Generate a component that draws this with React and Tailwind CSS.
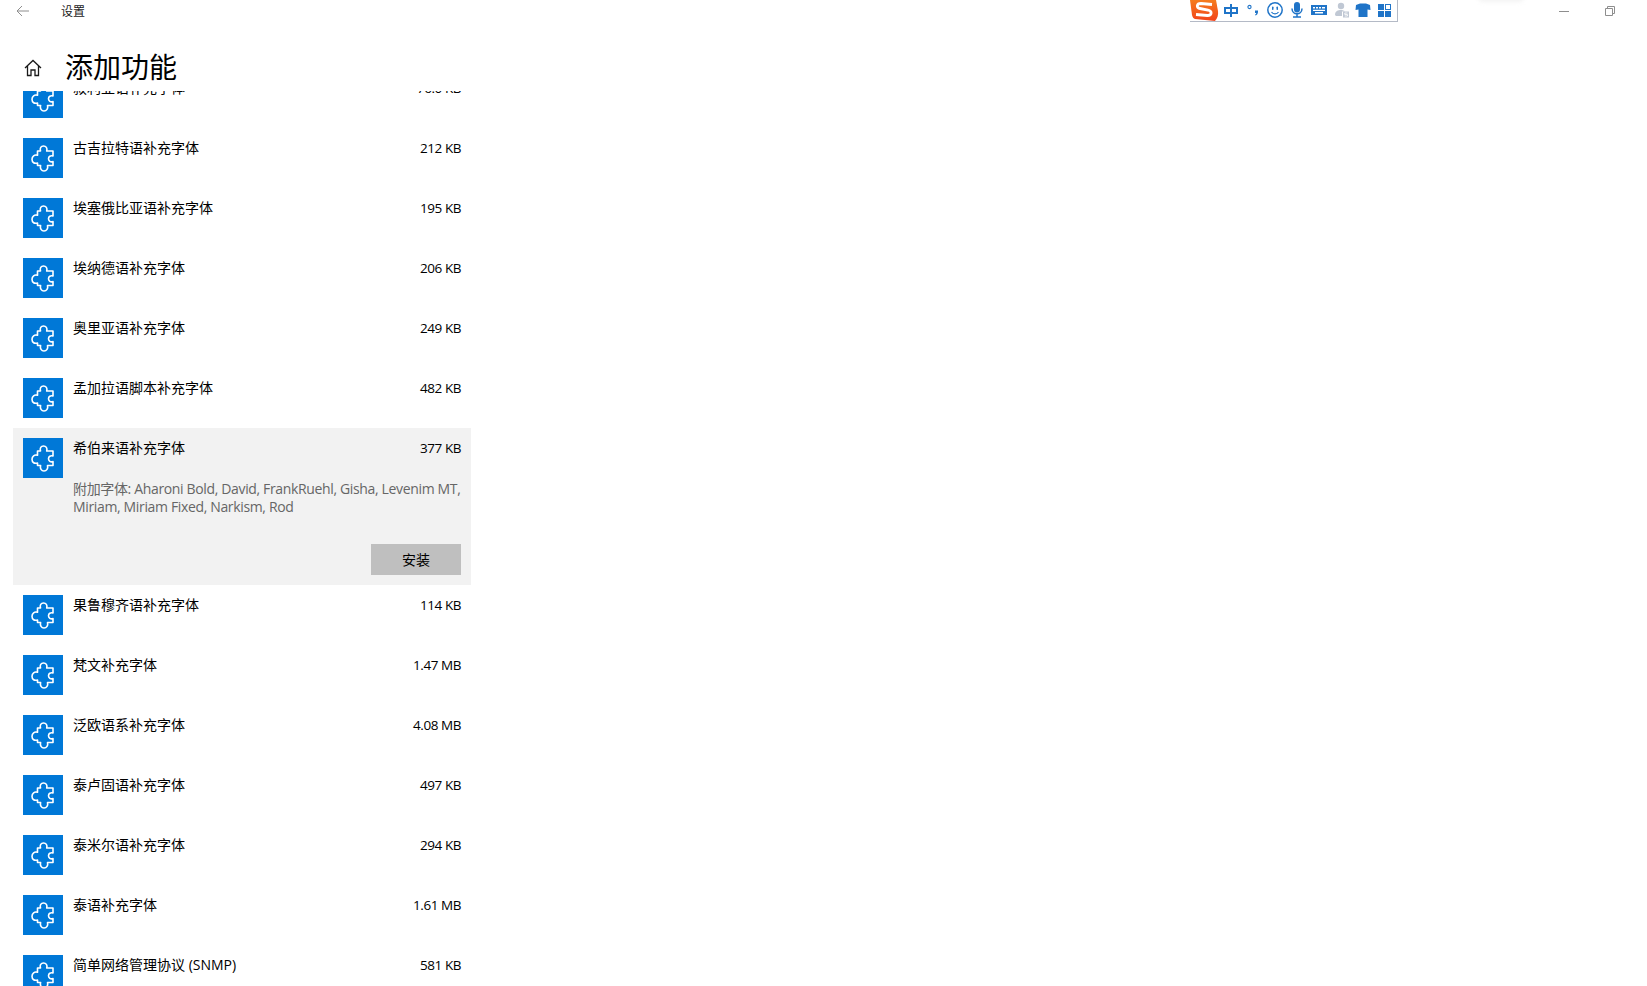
import React from 'react';

const fontStack = "font-['Open_Sans','Noto_Sans_CJK_SC',sans-serif]";

const rowsBefore = [
  { name: '叙利亚语补充字体', size: '76.0 KB' },
  { name: '古吉拉特语补充字体', size: '212 KB' },
  { name: '埃塞俄比亚语补充字体', size: '195 KB' },
  { name: '埃纳德语补充字体', size: '206 KB' },
  { name: '奥里亚语补充字体', size: '249 KB' },
  { name: '孟加拉语脚本补充字体', size: '482 KB' },
];

const rowsAfter = [
  { name: '果鲁穆齐语补充字体', size: '114 KB' },
  { name: '梵文补充字体', size: '1.47 MB' },
  { name: '泛欧语系补充字体', size: '4.08 MB' },
  { name: '泰卢固语补充字体', size: '497 KB' },
  { name: '泰米尔语补充字体', size: '294 KB' },
  { name: '泰语补充字体', size: '1.61 MB' },
  { name: '简单网络管理协议 (SNMP)', size: '581 KB' },
];

const PuzzleTile = () => (
  <div className="w-10 h-10 shrink-0 bg-[#0078d7]">
    <svg viewBox="0 0 40 40" className="w-10 h-10" fill="none" stroke="#fff" strokeWidth="1.6" strokeLinejoin="round">
      <path d="M14.5 13H17.5C16.6 10 18 8 20.5 8C23 8 24.6 10 23.7 13H30V18C27.5 17.2 25.5 18.5 25.5 20.8C25.5 23 27.5 24.4 30 23.6V27.5H24.5C25.3 30.5 23.6 33 21 33C18.4 33 16.8 30.5 17.6 27.5H14.5V25C11.5 26 9 24.5 9 21.3C9 18.2 11.5 16.4 14.5 17.3Z" />
    </svg>
  </div>
);

const SizeLabel = ({ children }) => (
  <span className="text-[13.5px] tracking-[-0.45px]">{children}</span>
);

const FeatureRow = ({ name, size }) => (
  <div className="flex gap-[10px] h-[60px] p-[10px] w-[458px]">
    <PuzzleTile />
    <div className="flex-1 flex justify-between text-sm leading-5 text-black">
      <span>{name}</span>
      <SizeLabel>{size}</SizeLabel>
    </div>
  </div>
);

const ImeBar = () => (
  <div className="absolute left-[1190px] top-0 w-[208px] h-[22px] bg-white border-r border-b border-[#b4bac6]">
    <svg viewBox="0 0 207 21" className="block w-[207px] h-[21px]" fill="#1f74c8">
      <defs>
        <linearGradient id="sogou" x1="0" y1="0" x2="0" y2="1">
          <stop offset="0" stopColor="#f57c1f" />
          <stop offset="1" stopColor="#f2431a" />
        </linearGradient>
      </defs>
      {/* sogou logo */}
      <path d="M0 0H26L28 11C28.5 15 27.5 18 25 21L5 19C3.5 18.5 2.5 17.5 2 15Z" fill="url(#sogou)" />
      <path d="M22 4.5L11 3.5C6.5 3.5 6 8 10 8.5L18 10C22.5 11 22 15.5 17.5 15.5L6 14.5" fill="none" stroke="#fff" strokeWidth="2.8" />
      {/* 中 */}
      <path d="M34 7H48V14H34ZM36 9V12H46V9Z" fillRule="evenodd" />
      <rect x="40" y="4" width="2" height="13" />
      {/* punctuation */}
      <circle cx="59.5" cy="7" r="1.6" fill="none" stroke="#1f74c8" strokeWidth="1.1" />
      <path d="M65 10.5H68V12C68 13.5 67 15 65.5 15.5L65 14.8C65.7 14.3 66.2 13.8 66.3 13H65Z" />
      {/* smiley */}
      <circle cx="85" cy="10" r="7.2" fill="none" stroke="#1f74c8" strokeWidth="1.5" />
      <rect x="82" y="6.5" width="1.5" height="3.5" rx="0.7" />
      <rect x="86.5" y="6.5" width="1.5" height="3.5" rx="0.7" />
      <path d="M81.5 12C83 14.5 87 14.5 88.5 12" fill="none" stroke="#1f74c8" strokeWidth="1.2" />
      {/* mic */}
      <rect x="104" y="2" width="6" height="10.5" rx="3" />
      <path d="M102 8.5C102 15.5 112 15.5 112 8.5M107 14V16.5M103 17H111" fill="none" stroke="#1f74c8" strokeWidth="1.5" />
      {/* keyboard */}
      <path d="M121 5H137V15H121ZM123 7V8.5H125V7ZM126 7V8.5H128V7ZM129 7V8.5H131V7ZM132 7V8.5H135V7ZM123 9.8V11H135V9.8ZM125 12V13.5H133V12Z" fillRule="evenodd" />
      {/* user with badge */}
      <circle cx="151" cy="6" r="3.2" fill="#c0c8d4" />
      <path d="M145 15C145 11 148 10 151 10C152.5 10 154 10.5 155 11.5H152V16H146Z" fill="#c0c8d4" />
      <rect x="153" y="11.5" width="6" height="6" fill="#c0c8d4" />
      <path d="M157.5 13H154.8V14.5H157.5V16H154.8" fill="none" stroke="#fff" strokeWidth="0.8" />
      {/* shirt */}
      <path d="M166 5L170 3.5H176L180 5L180.5 10L177.5 9.5V17H168.5V9.5L165.5 10Z" />
      {/* skin grid */}
      <rect x="188" y="4" width="6" height="6" />
      <rect x="195.5" y="4.5" width="5" height="5" fill="none" stroke="#1f74c8" />
      <rect x="188" y="11" width="6" height="6" />
      <rect x="195" y="11" width="6" height="6" />
    </svg>
  </div>
);

const App = () => {
  return (
    <div className={`relative w-[1647px] h-[986px] overflow-hidden bg-white flex flex-col ${fontStack}`}>
      {/* title bar */}
      <div className="h-[22px] flex items-center shrink-0">
        <svg viewBox="0 0 14 12" className="w-[14px] h-[12px] ml-[16px]" fill="none" stroke="#8e8e8e" strokeWidth="1">
          <path d="M13 6H1M6 1L1 6L6 11" />
        </svg>
        <span className="ml-[31px] mt-[2px] text-xs text-[#1a1a1a]">设置</span>
        <div className="ml-auto flex items-center">
          <div className="w-[10px] h-px bg-[#8e8e8e] mr-[36px]" />
          <svg viewBox="0 0 10 10" className="w-[10px] h-[10px] mr-[32px]" fill="none" stroke="#8e8e8e">
            <path d="M0.5 2.5H7.5V9.5H0.5ZM2.5 2.5V0.5H9.5V7.5H7.5" />
          </svg>
        </div>
      </div>

      {/* page header */}
      <div className="h-[69px] flex items-start shrink-0 bg-white relative z-10">
        <svg viewBox="0 0 18 18" className="w-[18px] h-[18px] ml-[24px] mt-[37px]" fill="none" stroke="#1a1a1a" strokeWidth="1.3">
          <path d="M1 9L9 1.5L17 9M3.5 7V16.5H7V11H11V16.5H14.5V7" />
        </svg>
        <h1 className="ml-[23px] mt-[23px] text-[28px] leading-[44px] text-black font-normal">添加功能</h1>
      </div>

      {/* scrolled list */}
      <div className="flex-1 overflow-hidden">
        <div className="ml-[13px] mt-[-23px]">
          {rowsBefore.map((row) => (
            <FeatureRow key={row.name} {...row} />
          ))}

          <div className="w-[458px] h-[157px] bg-[#f2f2f2] p-[10px]">
            <div className="flex gap-[10px]">
              <PuzzleTile />
              <div className="flex-1 text-sm">
                <div className="flex justify-between leading-5 text-black">
                  <span>希伯来语补充字体</span>
                  <SizeLabel>377 KB</SizeLabel>
                </div>
                <p className="mt-[22px] leading-[18px] text-[#666666] whitespace-nowrap tracking-[-0.35px]">
                  附加字体: Aharoni Bold, David, FrankRuehl, Gisha, Levenim MT,
                  <br />
                  Miriam, Miriam Fixed, Narkism, Rod
                </p>
              </div>
            </div>
            <div className="flex justify-end mt-[28px]">
              <button className="w-[90px] h-[31px] bg-[#bfbfbf] text-sm text-black">安装</button>
            </div>
          </div>

          {rowsAfter.map((row) => (
            <FeatureRow key={row.name} {...row} />
          ))}
        </div>
      </div>

      <ImeBar />
      <div className="absolute left-[1478px] top-[-8px] w-[46px] h-[10px] rounded-full bg-[#f3f3f3] blur-[2px]" />
    </div>
  );
};

export default App;
